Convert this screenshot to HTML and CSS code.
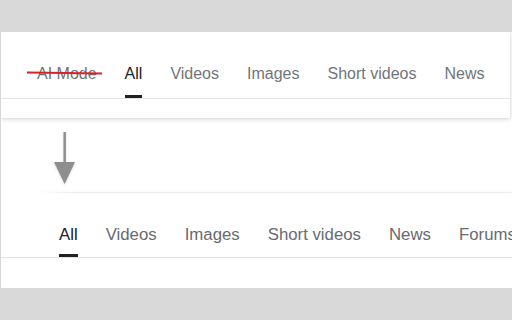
FILE: index.html
```html
<!DOCTYPE html>
<html>
<head>
<meta charset="utf-8">
<link rel="stylesheet" href="styles.css">
</head>
<body>
<div class="stage">
  <div class="card card-top">
    <div class="tabs tabs-top">
      <span class="tab tab-struck">AI Mode</span>
      <span class="tab active">All</span>
      <span class="tab">Videos</span>
      <span class="tab">Images</span>
      <span class="tab">Short videos</span>
      <span class="tab">News</span>
    </div>
  </div>
  <div class="arrow-wrap">
    <svg class="arrow" width="24" height="56" viewBox="0 0 24 56">
      <rect x="10.5" y="0" width="2.4" height="32" fill="#8e8e8e"/>
      <polygon points="1,30 22,30 11.6,52" fill="#8e8e8e"/>
    </svg>
  </div>
  <div class="fold"></div>
  <div class="card-bottom">
    <div class="tabs tabs-bottom">
      <span class="tab active">All</span>
      <span class="tab">Videos</span>
      <span class="tab">Images</span>
      <span class="tab">Short videos</span>
      <span class="tab">News</span>
      <span class="tab">Forums</span>
    </div>
  </div>
</div>
</body>
</html>
```
FILE: styles.css
```css
html, body {
  margin: 0;
  padding: 0;
}
body {
  background: #d9d9d9;
  font-family: "Liberation Sans", Arial, sans-serif;
  width: 512px;
  height: 320px;
  overflow: hidden;
}
.stage {
  margin-top: 32px;
  height: 256px;
  background: #fff;
  border-left: 1px solid #d6d6d6;
  display: flex;
  flex-direction: column;
  overflow: hidden;
}
.card-top {
  height: 86px;
  margin-right: 2px;
  background: #fff;
  box-shadow: 0 2px 4px rgba(0, 0, 0, 0.12), 1px 0 2px rgba(0, 0, 0, 0.08);
  flex-shrink: 0;
  position: relative;
  z-index: 1;
}
.tabs {
  display: flex;
  gap: 28px;
  white-space: nowrap;
  border-bottom: 1px solid #e4e4e4;
  overflow: hidden;
}
.tabs-top {
  padding-top: 32px;
  padding-left: 36px;
  font-size: 16px;
}
.tab {
  display: block;
  line-height: 20px;
  color: #70757a;
  border-bottom: 3px solid transparent;
  flex-shrink: 0;
}
.tabs-top .tab {
  padding-bottom: 11px;
}
.tab.active {
  color: #202124;
  border-bottom-color: #202124;
}
.tab-struck {
  position: relative;
}
.tab-struck::after {
  content: "";
  position: absolute;
  left: -10px;
  right: -5px;
  top: 8px;
  height: 2px;
  background: #d6232a;
  transform: rotate(0.8deg);
}
.arrow-wrap {
  height: 74px;
  padding: 14px 0 0 52px;
  box-sizing: border-box;
  flex-shrink: 0;
}
.arrow {
  display: block;
  filter: drop-shadow(0 1px 1px rgba(0, 0, 0, 0.18));
}
.fold {
  height: 1px;
  margin-left: 40px;
  background: linear-gradient(to right, rgba(230, 230, 230, 0), #ececec 30px);
  box-shadow: 0 -1px 3px rgba(0, 0, 0, 0.05);
  flex-shrink: 0;
}
.card-bottom {
  flex: 1;
}
.tabs-bottom {
  padding-top: 32px;
  padding-left: 58px;
  font-size: 16.8px;
}
.tabs-bottom .tab {
  padding-bottom: 9px;
  color: #676b70;
}
.tabs-bottom .tab.active {
  color: #202124;
}
```
